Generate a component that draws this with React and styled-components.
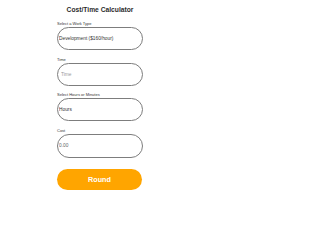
import React, { useState } from "react";
import styled, { createGlobalStyle } from "styled-components";

const GlobalStyle = createGlobalStyle`
  html, body {
    margin: 0;
    padding: 0;
    background: #ffffff;
  }
  body {
    font-family: "Liberation Sans", Arial, sans-serif;
  }
`;

const Page = styled.div`
  width: 200px;
  height: 200px;
  display: flex;
  justify-content: center;
`;

const Form = styled.form`
  width: 86px;
  display: flex;
  flex-direction: column;
  padding-top: 6px;
`;

const Title = styled.h1`
  margin: 0 0 7px;
  font-size: 6.7px;
  line-height: 8px;
  font-weight: 700;
  color: #2b2b2b;
  text-align: center;
  white-space: nowrap;
`;

const Fields = styled.div`
  display: flex;
  flex-direction: column;
  gap: 6.5px;
`;

const Field = styled.label`
  display: flex;
  flex-direction: column;
  gap: 1px;
`;

const LabelText = styled.span`
  font-size: 4px;
  line-height: 5px;
  color: #333;
  white-space: nowrap;
`;

const boxStyles = `
  box-sizing: border-box;
  width: 86px;
  border: 1px solid #7d7d7d;
  border-radius: 12px;
  background: #fff;
  font-family: "Liberation Sans", Arial, sans-serif;
  font-size: 4.8px;
  outline: none;
  margin: 0;
`;

const Select = styled.select`
  ${boxStyles}
  height: 23px;
  padding: 0 0 0 1px;
  color: #333;
  appearance: none;
  -webkit-appearance: none;
`;

const Input = styled.input`
  ${boxStyles}
  height: ${(p) => (p.$tall ? "24px" : "23px")};
  padding: 0 0 0 ${(p) => p.$pad || "1px"};
  color: ${(p) => p.$muted ? "#666" : "#333"};

  &::placeholder {
    color: #9a9a9a;
  }
`;

const RoundButton = styled.button`
  margin-top: 11px;
  height: 21px;
  width: 85px;
  border: none;
  border-radius: 11px;
  background: #ffa500;
  color: #fff;
  font-family: "Liberation Sans", Arial, sans-serif;
  font-size: 7.2px;
  font-weight: 700;
  cursor: pointer;
  padding: 0;
`;

const App = () => {
  const [workType, setWorkType] = useState("dev");
  const [time, setTime] = useState("");
  const [unit, setUnit] = useState("hours");

  return (
    <>
      <GlobalStyle />
      <Page>
        <Form onSubmit={(e) => e.preventDefault()}>
          <Title>Cost/Time Calculator</Title>
          <Fields>
            <Field>
              <LabelText>Select a Work Type</LabelText>
              <Select value={workType} onChange={(e) => setWorkType(e.target.value)}>
                <option value="dev">Development ($160/hour)</option>
                <option value="design">Design ($120/hour)</option>
              </Select>
            </Field>
            <Field>
              <LabelText>Time</LabelText>
              <Input
                type="text"
                placeholder="Time"
                $pad="3px"
                value={time}
                onChange={(e) => setTime(e.target.value)}
              />
            </Field>
            <Field>
              <LabelText>Select Hours or Minutes</LabelText>
              <Select value={unit} onChange={(e) => setUnit(e.target.value)}>
                <option value="hours">Hours</option>
                <option value="minutes">Minutes</option>
              </Select>
            </Field>
            <Field>
              <LabelText>Cost</LabelText>
              <Input type="text" value="0.00" readOnly $tall $muted />
            </Field>
          </Fields>
          <RoundButton type="button">Round</RoundButton>
        </Form>
      </Page>
    </>
  );
};

export default App;
